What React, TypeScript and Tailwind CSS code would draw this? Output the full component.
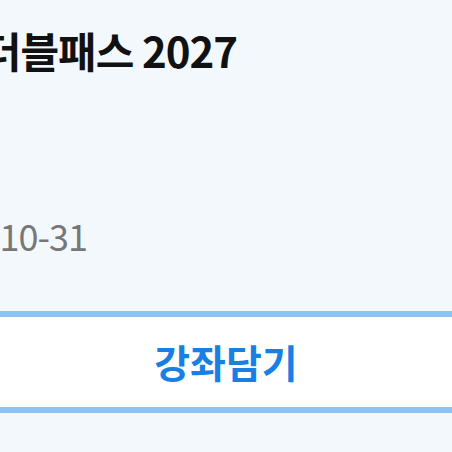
export default function App() {
  return (
    <div
      className="w-[452px] h-[452px] overflow-hidden bg-[#f3f8fd] flex flex-col"
      style={{ fontFamily: '"Noto Sans CJK KR", "Noto Sans", sans-serif' }}
    >
      <div className="w-[237px] flex justify-end pt-[23px] h-[84px]">
        <h1 className="whitespace-nowrap text-[42px] leading-[54px] font-bold text-[#111] tracking-[-1px]">
          해커스 더블패스 2027
        </h1>
      </div>
      <div className="w-[87px] flex justify-end mt-[127px] h-[48px]">
        <p className="whitespace-nowrap text-[36px] leading-[48px] text-[#777] tracking-[-1px]">
          2026-10-31
        </p>
      </div>
      <button
        type="button"
        className="mt-[52px] h-[102px] w-full bg-white border-y-[6px] border-[#8fc2f5] flex items-center justify-center"
      >
        <span className="text-[39px] font-bold text-[#1a7fe3] leading-none pb-[2px]">강좌담기</span>
      </button>
    </div>
  );
}
